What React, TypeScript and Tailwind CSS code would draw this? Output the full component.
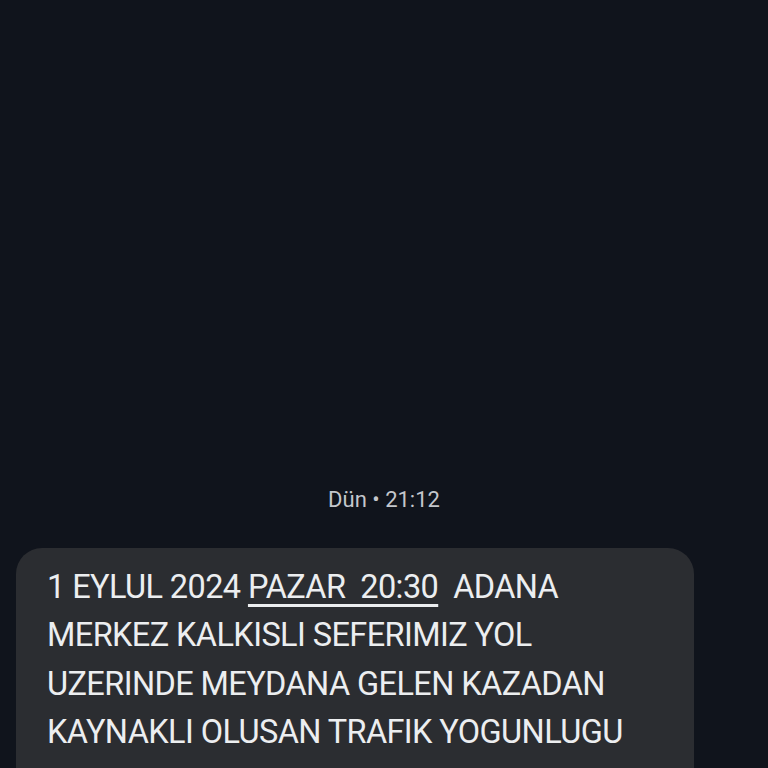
import React from "react";

export default function App() {
  return (
    <div className="w-[768px] h-[768px] overflow-hidden bg-[#10141c] flex flex-col" style={{ fontFamily: "Roboto, 'Noto Sans', sans-serif" }}>
      <div className="h-[485px] shrink-0" />
      <div className="text-center text-[22px] leading-[30px] text-[#c4c7cc]">Dün • 21:12</div>
      <div className="h-[33px] shrink-0" />
      <div className="ml-[16px] w-[678px] rounded-[26px] bg-[#2b2d31] pl-[31px] pr-[20px] pt-[15px] pb-[60px] text-[#eceef0] text-[32.5px] leading-[48.3px] tracking-[-0.6px]">
        <div>
          1 EYLUL 2024 <span className="underline decoration-[2.5px] underline-offset-[6px]">PAZAR&nbsp; 20:30</span>&nbsp; ADANA
        </div>
        <div>MERKEZ KALKISLI SEFERIMIZ YOL</div>
        <div>UZERINDE MEYDANA GELEN KAZADAN</div>
        <div>KAYNAKLI OLUSAN TRAFIK YOGUNLUGU</div>
      </div>
    </div>
  );
}
